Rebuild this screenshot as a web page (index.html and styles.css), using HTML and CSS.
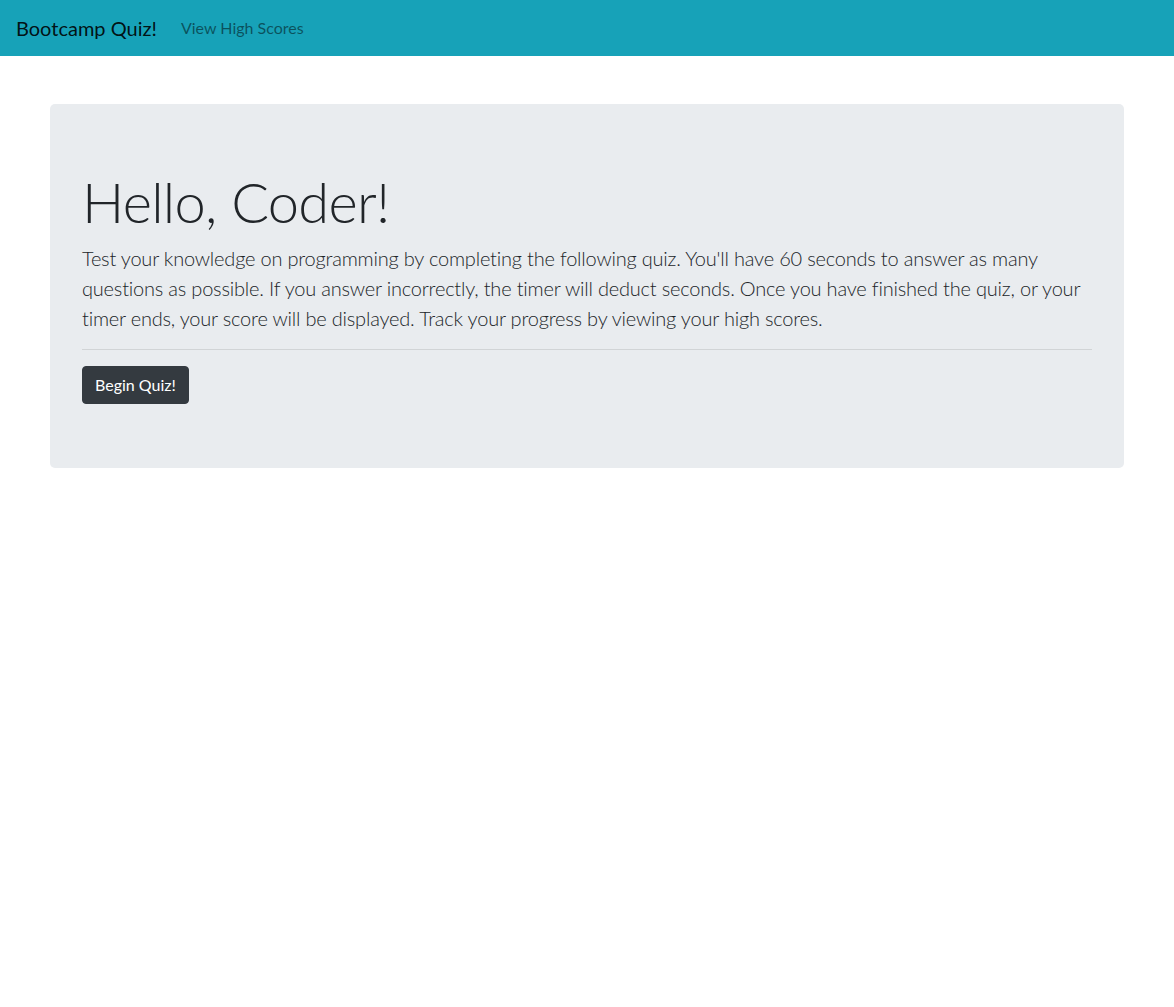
FILE: index.html
```html
<!DOCTYPE html>
<html lang="en">
<head>
<meta charset="utf-8">
<title>Bootcamp Quiz!</title>
<link rel="stylesheet" href="styles.css">
</head>
<body>
<nav class="navbar">
  <a class="brand" href="#">Bootcamp Quiz!</a>
  <a class="nav-link" href="#">View High Scores</a>
</nav>
<main class="page">
  <section class="jumbotron">
    <h1 class="display">Hello, Coder!</h1>
    <p class="lead">Test your knowledge on programming by completing the following quiz. You'll have 60 seconds to answer as many questions as possible. If you answer incorrectly, the timer will deduct seconds. Once you have finished the quiz, or your timer ends, your score will be displayed. Track your progress by viewing your high scores.</p>
    <hr class="divider">
    <button class="btn-dark" type="button">Begin Quiz!</button>
  </section>
</main>
</body>
</html>
```
FILE: styles.css
```css
* { box-sizing: border-box; }
body {
  margin: 0;
  font-family: Lato, "Open Sans", sans-serif;
  font-size: 16px;
  line-height: 1.5;
  color: #212529;
  background: #fff;
}
.navbar {
  display: flex;
  align-items: center;
  height: 56px;
  padding: 8px 16px;
  background: #17a2b8;
}
.brand {
  font-size: 20px;
  line-height: 30px;
  color: rgba(0,0,0,.9);
  text-decoration: none;
  margin-right: 16px;
}
.nav-link {
  padding: 8px;
  color: rgba(0,0,0,.5);
  text-decoration: none;
  font-size: 16px;
}
.page {
  padding: 48px 50px;
}
.jumbotron {
  background: #e9ecef;
  border-radius: 5px;
  padding: 64px 32px;
}
.display {
  margin: 0 0 8px;
  font-size: 56px;
  font-weight: 300;
  line-height: 1.2;
  letter-spacing: -0.7px;
}
.lead {
  margin: 0 0 16px;
  font-size: 20px;
  font-weight: 300;
  line-height: 30px;
  letter-spacing: -0.2px;
}
.divider {
  margin: 0 0 16px;
  border: 0;
  border-top: 1px solid rgba(0,0,0,.1);
}
.btn-dark {
  font-family: inherit;
  font-size: 16px;
  line-height: 24px;
  padding: 6px 12px;
  color: #fff;
  background: #343a40;
  border: 1px solid #343a40;
  border-radius: 4px;
  height: 38px;
}
```
